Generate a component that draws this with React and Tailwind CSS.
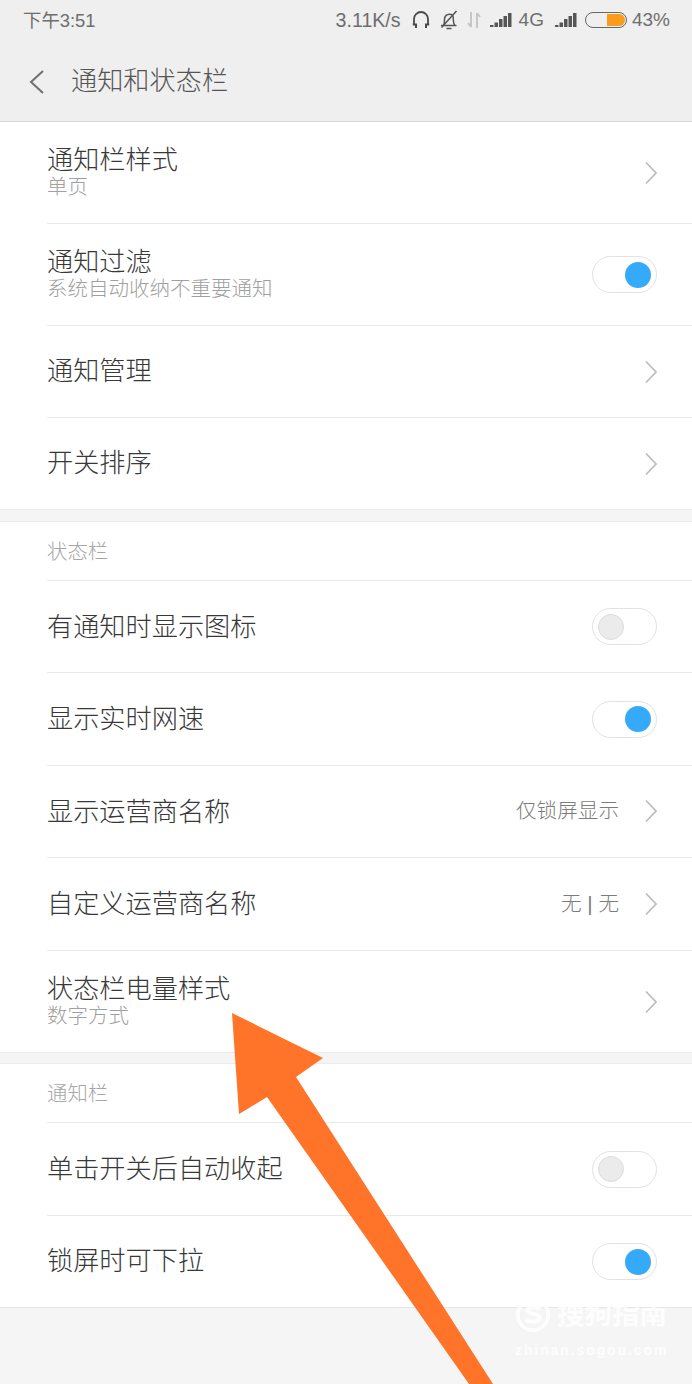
const FONT = "font-['Liberation_Sans','Noto_Sans_CJK_SC',sans-serif]";

function Toggle({ on }) {
  return (
    <div className={`flex h-[37px] w-[65px] shrink-0 items-center rounded-full border border-[#e4e2e0] bg-white px-[5px] ${on ? 'justify-end' : 'justify-start'}`}>
      <div className={on ? 'h-[26px] w-[26px] rounded-full bg-[#35aafa]' : 'h-[26px] w-[26px] rounded-full border border-[#dcdcdc] bg-[#ebebeb]'} />
    </div>
  );
}

function Chevron() {
  return (
    <svg className="shrink-0" width="12" height="24" viewBox="0 0 12 24" fill="none" stroke="#bcbcbc" strokeWidth="1.7">
      <path d="M1 1.5 L11 12 L1 22.5" />
    </svg>
  );
}

function Row({ title, sub, value, toggle, height, last, low }) {
  return (
    <div className="pl-[47px]">
      <div className={`flex items-center justify-between pr-[35px] ${height} ${last ? '' : 'border-b border-[#e9e9e9]'}`}>
        <div className={`min-w-0 font-light ${low ? '' : 'pb-[2px]'}`}>
          <div className="text-[26.2px] leading-[30px] text-[#383838]">{title}</div>
          {sub && <div className="text-[20.5px] leading-[24px] text-[#a0a0a0]">{sub}</div>}
        </div>
        {toggle === undefined ? (
          <div className="flex items-center gap-[26px]">
            {value && <span className="text-[20.6px] font-light text-[#7c7c7c]">{value}</span>}
            <Chevron />
          </div>
        ) : (
          <Toggle on={toggle} />
        )}
      </div>
    </div>
  );
}

function SectionLabel({ children }) {
  return (
    <div className="pl-[47px]">
      <div className="flex h-[59px] items-center border-b border-[#e9e9e9] pt-[2px] text-[20.4px] font-light text-[#a6a6a6]">{children}</div>
    </div>
  );
}

function Signal() {
  return (
    <svg width="22" height="16" viewBox="0 0 22 16" fill="#565656">
      <rect x="0" y="13" width="3.5" height="2" />
      <rect x="4.5" y="10.5" width="3.5" height="4.5" />
      <rect x="9" y="7" width="3.5" height="8" />
      <rect x="13.5" y="4" width="3.5" height="11" />
      <rect x="18" y="1" width="3.5" height="14" />
    </svg>
  );
}

function StatusBar() {
  return (
    <div className="flex h-[41px] items-center justify-between pl-[23px] pr-[22px] text-[19px] text-[#6e6e6e]">
      <span className="text-[18.4px]">下午3:51</span>
      <div className="flex items-center">
        <span className="text-[19.6px]">3.11K/s</span>
        <svg className="ml-[11px]" width="18" height="20" viewBox="0 0 18 20" fill="none" stroke="#4a4a4a" strokeWidth="1.8">
          <path d="M2 14.5V9a7 7 0 0 1 14 0v5.5" />
          <path d="M0.8 14.5h3.2v3.5M17.2 14.5h-3.2v3.5" strokeWidth="2" />
        </svg>
        <svg className="ml-[10px]" width="18" height="20" viewBox="0 0 18 20" fill="none" stroke="#555555" strokeWidth="1.5">
          <path d="M1 15.5h15.5M3.5 15.5c1.2-2 1-4 1-6.5a5 5 0 0 1 8-3.8c.8 1 .8 2.8.8 4.3 0 2.5.3 4 1.5 6" />
          <path d="M6.5 18.5h5M1.5 17.5L16.5 1" />
        </svg>
        <svg className="ml-[8px]" width="16" height="18" viewBox="0 0 16 18" fill="none" stroke="#c6c6c6" strokeWidth="2">
          <path d="M5 1v15M5 16l-3-4M11 17V2M11 2l3 4" />
        </svg>
        <div className="ml-[8px]"><Signal /></div>
        <span className="ml-[7px]">4G</span>
        <div className="ml-[11px]"><Signal /></div>
        <div className="ml-[8px] flex h-[16px] w-[42px] items-center justify-end rounded-full border-[1.5px] border-[#666666] pr-[1px]">
          <div className="h-[12px] w-[18px] rounded-r-full rounded-l-[2px] bg-[#fb9b1c]" />
        </div>
        <span className="ml-[5px]">43%</span>
      </div>
    </div>
  );
}

export default function App() {
  return (
    <div className={`relative h-[1384px] w-[692px] overflow-hidden bg-[#f5f5f5] ${FONT}`}>
      <div className="h-[122px] border-b border-[#d9d9d9] bg-[#efefef]">
        <StatusBar />
        <div className="flex h-[80px] items-center pl-[29px] pt-[2px]">
          <svg width="15" height="24" viewBox="0 0 15 24" fill="none" stroke="#6f6f6f" strokeWidth="2">
            <path d="M14 1 L2 12 L14 23" />
          </svg>
          <span className="ml-[27px] text-[26.2px] font-light text-[#555555]">通知和状态栏</span>
        </div>
      </div>

      <div className="bg-white">
        <Row title="通知栏样式" sub="单页" height="h-[102px]" />
        <Row title="通知过滤" sub="系统自动收纳不重要通知" toggle={true} height="h-[102px]" />
        <Row title="通知管理" height="h-[92px]" />
        <Row title="开关排序" height="h-[91px]" last />
      </div>
      <div className="h-[13px] border-y border-[#ececec] bg-[#f5f5f5]" />
      <div className="bg-white">
        <SectionLabel>状态栏</SectionLabel>
        <Row title="有通知时显示图标" toggle={false} height="h-[92px]" low />
        <Row title="显示实时网速" toggle={true} height="h-[93px]" low />
        <Row title="显示运营商名称" value="仅锁屏显示" height="h-[92px]" low />
        <Row title="自定义运营商名称" value="无 | 无" height="h-[93px]" low />
        <Row title="状态栏电量样式" sub="数字方式" height="h-[101px]" last />
      </div>
      <div className="h-[12px] border-y border-[#ececec] bg-[#f5f5f5]" />
      <div className="bg-white">
        <SectionLabel>通知栏</SectionLabel>
        <Row title="单击开关后自动收起" toggle={false} height="h-[93px]" low />
        <div className="border-b border-[#e6e6e6]">
          <Row title="锁屏时可下拉" toggle={true} height="h-[91px]" last />
        </div>
      </div>

      {/* watermark */}
      <div className="absolute left-[515px] top-[1296px] w-[160px] text-white/80">
        <div className="flex items-center">
          <svg width="38" height="38" viewBox="0 0 40 40" fill="none" stroke="currentColor">
            <circle cx="19" cy="20" r="16" strokeWidth="4" />
            <path d="M27 14c-4-3-14-3-14 1s13 3 13 8-10 5-15 2" strokeWidth="4.5" />
          </svg>
          <span className="ml-[4px] text-[27.5px] font-bold leading-[38px]">搜狗指南</span>
        </div>
        <div className="mt-[8px] text-[14px] font-bold leading-[16px] tracking-[1.9px]">zhinan.sogou.com</div>
      </div>

      {/* arrow drawn over the screenshot */}
      <svg className="absolute left-0 top-0" width="692" height="1384" viewBox="0 0 692 1384">
        <polygon points="232,1013 323,1058 296,1077 493,1384 469,1384 267,1097 239,1114" fill="#ff7428" />
      </svg>
    </div>
  );
}
